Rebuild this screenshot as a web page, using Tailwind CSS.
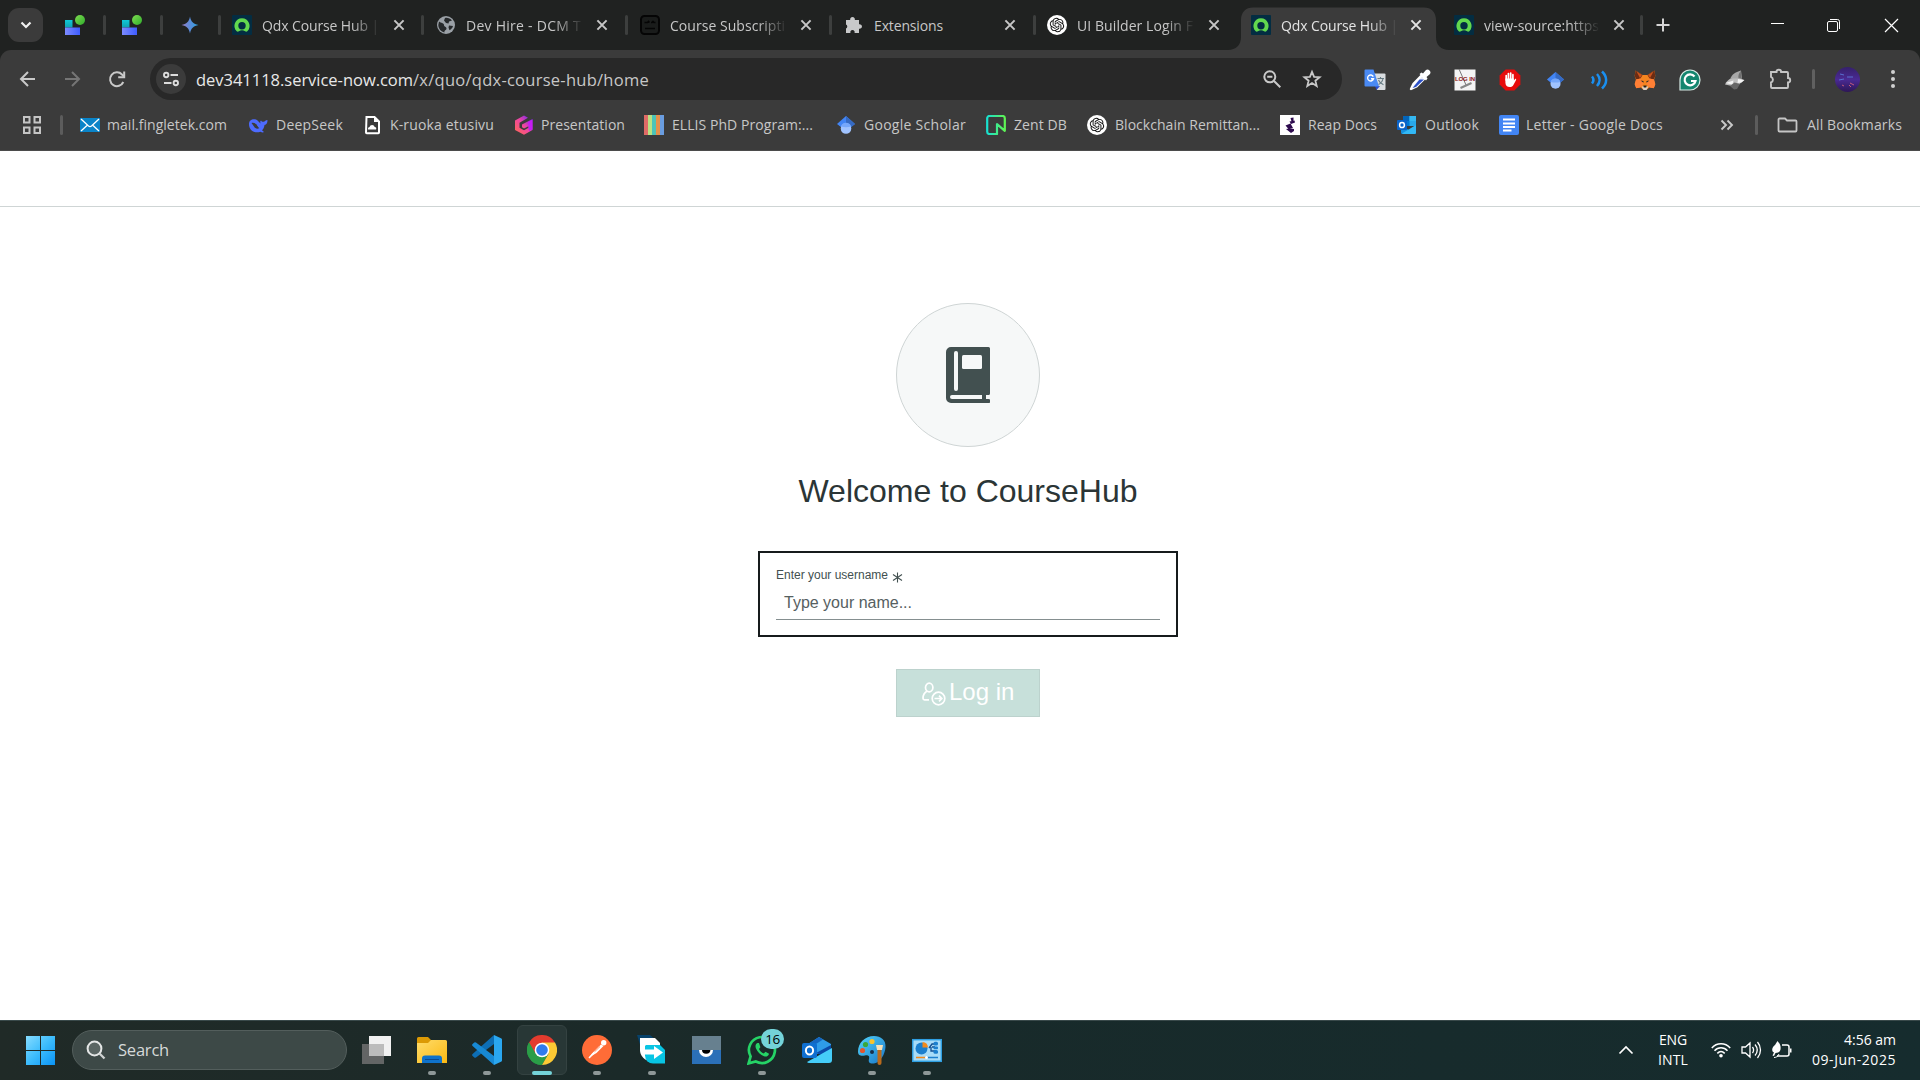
<!DOCTYPE html>
<html lang="en">
<head>
<meta charset="utf-8">
<title>Qdx Course Hub</title>
<script src="https://cdn.jsdelivr.net/npm/@tailwindcss/browser@4"></script>
</head>
<body class="w-[1920px] h-[1080px] overflow-hidden flex flex-col bg-white font-['Open_Sans','Noto_Sans',sans-serif] text-[14px]">

<svg class="absolute size-0">
  <defs><linearGradient id="lfa" x1="0" y1="0" x2="0" y2="1"><stop offset="0" stop-color="#10c8d8"/><stop offset="1" stop-color="#0fa3b0"/></linearGradient><linearGradient id="lfb" x1="0" x2="1"><stop offset="0" stop-color="#7d8bff"/><stop offset="1" stop-color="#3d5cff"/></linearGradient><linearGradient id="lfc" x1="0" x2="1" y2="1"><stop offset="0" stop-color="#7fdc50"/><stop offset="1" stop-color="#2fae2c"/></linearGradient></defs>
  <symbol id="x" viewBox="0 0 16 16"><path d="M3.400 3.400l9.200 9.200M12.600 3.400l-9.200 9.200" stroke="currentColor" stroke-width="2" fill="none"/></symbol>
  <symbol id="quo" viewBox="0 0 20 20"><rect width="20" height="20" rx="1" fill="#032d42"/><path d="M10 3.200a7.600 7.600 0 0 0-5.300 13c.6.6 1.500.6 2.200.1a5.200 5.200 0 0 1 6.200 0c.7.5 1.600.5 2.200-.1A7.600 7.600 0 0 0 10 3.200zm0 11.200a3.700 3.700 0 1 1 0-7.400 3.700 3.700 0 0 1 0 7.400z" fill="#62d84e"/></symbol>
  <symbol id="lf" viewBox="0 0 20 20"><path d="M0 5h7.500v7.500H0z" fill="url(#lfa)"/><path d="M0 12.500h15V20H0z" fill="url(#lfb)"/><circle cx="15" cy="5" r="5" fill="url(#lfc)"/></symbol>
  <symbol id="gpt" viewBox="0 0 20 20"><circle cx="10" cy="10" r="10" fill="#fff"/><g transform="translate(2.800 2.800) scale(.6)"><path fill="#111" d="M22.282 9.821a5.985 5.985 0 0 0-.516-4.910 6.046 6.046 0 0 0-6.510-2.900A6.065 6.065 0 0 0 4.981 4.180a5.985 5.985 0 0 0-3.998 2.900 6.046 6.046 0 0 0 .743 7.097 5.980 5.980 0 0 0 .510 4.911 6.051 6.051 0 0 0 6.515 2.900A5.985 5.985 0 0 0 13.260 24a6.056 6.056 0 0 0 5.772-4.206 5.990 5.990 0 0 0 3.997-2.900 6.056 6.056 0 0 0-.747-7.073zM13.260 22.430a4.476 4.476 0 0 1-2.876-1.040l.141-.081 4.779-2.758a.795.795 0 0 0 .392-.681v-6.737l2.020 1.168a.071.071 0 0 1 .038.052v5.583a4.504 4.504 0 0 1-4.494 4.494zM3.600 18.304a4.470 4.470 0 0 1-.535-3.014l.142.085 4.783 2.759a.771.771 0 0 0 .780 0l5.843-3.369v2.332a.080.080 0 0 1-.033.062L9.740 19.950a4.500 4.500 0 0 1-6.140-1.646zM2.340 7.896a4.485 4.485 0 0 1 2.366-1.973V11.600a.766.766 0 0 0 .388.676l5.815 3.355-2.020 1.168a.076.076 0 0 1-.071 0l-4.830-2.786A4.504 4.504 0 0 1 2.340 7.872zm16.597 3.855l-5.833-3.387L15.119 7.200a.076.076 0 0 1 .071 0l4.830 2.791a4.494 4.494 0 0 1-.676 8.105v-5.678a.790.790 0 0 0-.407-.667zm2.010-3.023l-.141-.085-4.774-2.782a.776.776 0 0 0-.785 0L9.409 9.230V6.897a.066.066 0 0 1 .028-.061l4.830-2.787a4.500 4.500 0 0 1 6.680 4.660zm-12.640 4.135l-2.020-1.164a.080.080 0 0 1-.038-.057V6.075a4.500 4.500 0 0 1 7.375-3.453l-.142.080L8.704 5.460a.795.795 0 0 0-.393.681zm1.097-2.365l2.602-1.500 2.607 1.500v2.999l-2.597 1.500-2.607-1.500z"/></g></symbol>
  <symbol id="outlook" viewBox="0 0 20 20"><path d="M6 1h13v10H6z" fill="#28a8ea"/><path d="M6 1h6.500v5H6z" fill="#0364b8"/><path d="M12.500 1H19v5h-6.500z" fill="#35b8f1"/><path d="M6 6h6.500v5H6z" fill="#0078d4"/><path d="M4 10l8 5 7-5v7.500a1.500 1.500 0 0 1-1.500 1.500h-12A1.500 1.500 0 0 1 4 17.500z" fill="#1490df"/><path d="M19 10L5 18.600l1 .4h11.500a1.500 1.500 0 0 0 1.500-1.500z" fill="#32b8f5"/><rect y="5" width="10" height="10" rx="1" fill="#0a63c9"/><ellipse cx="5" cy="10" rx="2.400" ry="2.600" fill="none" stroke="#fff" stroke-width="1.500"/></symbol>
  <symbol id="scholar" viewBox="0 0 20 20"><path d="M10 1L1 9l4.500 3.600h9L19 9z" fill="#4285f4"/><path d="M10 1l9 8-4.500 3.500L10 9z" fill="#356ac3"/><circle cx="10" cy="13.400" r="5.300" fill="#a0c3ff"/><path d="M4.900 11.500a5.400 5.400 0 0 1 10.200 0 20 20 0 0 1-10.200 0z" fill="#76a7fa"/></symbol>
</svg>

<!-- tab strip -->
<header class="h-[50px] shrink-0 bg-[#202221] flex items-center text-[#c7c7c7] relative">
  <div class="w-[35px] h-[34px] ml-2 rounded-[11px] bg-[#3b3b3b] flex items-center justify-center"><svg class="size-4" viewBox="0 0 16 16"><path d="M3.500 5.500L8 10l4.500-4.500" stroke="#f0f0f0" stroke-width="2.200" fill="none"/></svg></div>
  <svg class="size-5 ml-[22px]"><use href="#lf"/></svg>
  <i class="w-[3px] h-5 rounded bg-[#3d3f3e] ml-[18px]"></i>
  <svg class="size-5 ml-[16px]"><use href="#lf"/></svg>
  <i class="w-[3px] h-5 rounded bg-[#3d3f3e] ml-[18px]"></i>
  <svg class="size-5 ml-[17px]" viewBox="0 0 20 20"><defs><linearGradient id="gm" x1="0" x2="1"><stop offset="0" stop-color="#9a7bc0"/><stop offset=".5" stop-color="#5a8ddb"/><stop offset="1" stop-color="#2aa0dc"/></linearGradient></defs><path d="M10 1.500c.8 5 3.500 7.700 8.500 8.500-5 .8-7.700 3.500-8.500 8.500-.8-5-3.500-7.700-8.500-8.500 5-.8 7.700-3.500 8.500-8.500z" fill="url(#gm)"/></svg>
  <i class="w-[3px] h-5 rounded bg-[#3d3f3e] ml-[18px]"></i>

  <div class="w-[203px] h-full flex items-center pl-[11px] relative">
    <svg class="size-5"><use href="#quo"/></svg>
    <div class="w-[118px] ml-[10px] overflow-hidden whitespace-nowrap [mask-image:linear-gradient(to_right,black_76%,transparent_100%)]"><span data-w="117">Qdx Course Hub |</span></div>
    <svg class="size-4 ml-[11px]"><use href="#x"/></svg>
    <i class="absolute right-0 w-[3px] h-5 rounded bg-[#3d3f3e]"></i>
  </div>
  <div class="w-[204px] h-full flex items-center pl-[12px] relative">
    <svg class="size-5" viewBox="0 0 20 20"><circle cx="10" cy="10" r="9" fill="#9aa0a6"/><path d="M3 6.500C5 8 8 8 8 10s2.500 1.500 2.500 3.500S8 15 8.500 17.500C5 16.500 2.500 14 2.300 10zM9 3c2-.7 5 0 7 2.500l-3 1-.5 2-2.500-.5-2-2.500zM13 10.500l4 .5c-.5 2-2 3.500-3.500 4.300l-1-2.800z" fill="#26292b"/></svg>
    <div class="w-[118px] ml-[10px] overflow-hidden whitespace-nowrap [mask-image:linear-gradient(to_right,black_74%,transparent_100%)]"><span data-w="115">Dev Hire - DCM T</span></div>
    <svg class="size-4 ml-[10px]"><use href="#x"/></svg>
    <i class="absolute right-0 w-[3px] h-5 rounded bg-[#3d3f3e]"></i>
  </div>
  <div class="w-[204px] h-full flex items-center pl-[12px] relative">
    <svg class="size-5" viewBox="0 0 20 20" fill="none" stroke="#050505"><rect x="1" y="1" width="18" height="18" rx="3.500" fill="#1a1c1b" stroke-width="2"/><path d="M4.500 7.500h3l1-1 1 1M11 7.500h1l1-1 1 1h1.500M5 13.500h10" stroke-width="1.600"/></svg>
    <div class="w-[118px] ml-[10px] overflow-hidden whitespace-nowrap [mask-image:linear-gradient(to_right,black_74%,transparent_100%)]"><span data-w="115">Course Subscripti</span></div>
    <svg class="size-4 ml-[10px]"><use href="#x"/></svg>
    <i class="absolute right-0 w-[3px] h-5 rounded bg-[#3d3f3e]"></i>
  </div>
  <div class="w-[204px] h-full flex items-center pl-[12px] relative">
    <svg class="size-5" viewBox="0 0 20 20"><path d="M2 5h4.200a2.400 2.400 0 1 1 4.600 0H15v4.300a2.300 2.300 0 1 1 0 4.400V18h-4.500a2.200 2.200 0 1 0-4 0H2v-4.500a2.200 2.200 0 0 0 0-4z" fill="#c8c9ca"/></svg>
    <div class="w-[118px] ml-[10px] overflow-hidden whitespace-nowrap"><span data-w="69">Extensions</span></div>
    <svg class="size-4 ml-[10px]"><use href="#x"/></svg>
    <i class="absolute right-0 w-[3px] h-5 rounded bg-[#3d3f3e]"></i>
  </div>
  <div class="w-[203px] h-full flex items-center pl-[11px] relative">
    <svg class="size-5"><use href="#gpt"/></svg>
    <div class="w-[118px] ml-[10px] overflow-hidden whitespace-nowrap [mask-image:linear-gradient(to_right,black_74%,transparent_100%)]"><span data-w="116">UI Builder Login F</span></div>
    <svg class="size-4 ml-[11px]"><use href="#x"/></svg>
  </div>
  <div class="w-[203px] h-full flex items-center pl-[12px] relative text-[#e3e3e3]">
    <svg class="absolute -left-[11px] top-[7px] w-[221px] h-[43px]" viewBox="0 0 221 43"><path d="M0 43c8 0 13-5 13-13V13C13 5 18 .5 25 .5h171c7 0 12 4.500 12 12.500v17c0 8 5 13 13 13z" fill="#3b3b3b"/></svg>
    <svg class="size-5 relative"><use href="#quo"/></svg>
    <div class="w-[118px] ml-[10px] relative overflow-hidden whitespace-nowrap [mask-image:linear-gradient(to_right,black_74%,transparent_99%)]"><span data-w="117">Qdx Course Hub |</span></div>
    <svg class="size-4 ml-[9px] relative"><use href="#x"/></svg>
  </div>
  <div class="w-[201px] h-full flex items-center pl-[12px] relative">
    <svg class="size-5"><use href="#quo"/></svg>
    <div class="w-[116px] ml-[10px] overflow-hidden whitespace-nowrap [mask-image:linear-gradient(to_right,black_74%,transparent_100%)]"><span data-w="115">view-source:https</span></div>
    <svg class="size-4 ml-[11px]"><use href="#x"/></svg>
    <i class="absolute right-0 w-[3px] h-5 rounded bg-[#3d3f3e]"></i>
  </div>
  <svg class="size-4 ml-[12px]" viewBox="0 0 16 16"><path d="M8 1.500v13M1.500 8h13" stroke="#d5d5d5" stroke-width="2"/></svg>
  <div class="ml-auto mr-[21px] flex items-center gap-[42px]">
    <svg class="w-[15px] h-4" viewBox="0 0 15 16"><path d="M1 6.500h13" stroke="#fff"/></svg>
    <svg class="size-[15px] -translate-x-px" viewBox="0 0 15 15" fill="none" stroke="#fff"><rect x="1.500" y="3.500" width="10" height="10" rx="1.500"/><path d="M4 1.500h7.500a2 2 0 0 1 2 2V11"/></svg>
    <svg class="size-[15px]" viewBox="0 0 15 15"><path d="M1 1l13 13M14 1L1 14" stroke="#fff" stroke-width="1.200"/></svg>
  </div>
</header>

<!-- address bar and bookmarks -->
<div class="bg-[#202221] shrink-0">
<div class="h-[101px] bg-[#3b3b3b] rounded-t-[11px] border-b border-[#4b4b4b]">
  <div class="h-[58px] flex items-center text-[#c7c7c7]">
    <svg class="size-5 ml-[17px]" viewBox="0 0 20 20"><path d="M18 10H4M11 3l-7 7 7 7" stroke="#c9c9c9" stroke-width="2" fill="none"/></svg>
    <svg class="size-5 ml-[26px]" viewBox="0 0 20 20"><path d="M2 10h14M9 3l7 7-7 7" stroke="#757575" stroke-width="2" fill="none"/></svg>
    <svg class="size-5 ml-[24px]" viewBox="0 0 20 20"><path d="M16.300 13A6.900 6.900 0 1 1 15 5.500l2 2" stroke="#c9c9c9" stroke-width="2" fill="none"/><path d="M17.200 2.500V8.200h-6" stroke="#c9c9c9" stroke-width="2" fill="none"/></svg>
    <div class="ml-[23px] w-[1192px] h-[42px] rounded-full bg-[#282828] flex items-center pl-[6px] pr-[20px]">
      <div class="size-[30px] rounded-full bg-[#3b3b3b] flex items-center justify-center"><svg class="size-[18px]" viewBox="0 0 18 18" fill="none" stroke="#dcdcdc" stroke-width="1.900"><circle cx="4.200" cy="5" r="2.200"/><path d="M8.500 5H16M2 13h7.500"/><circle cx="13.800" cy="13" r="2.200"/></svg></div>
      <div class="ml-[10px] pt-[2px] text-[16.500px] whitespace-nowrap"><span data-w="217" class="text-[#e8e8e8]">dev341118.service-now.com</span><span data-w="236">/x/quo/qdx-course-hub/home</span></div>
      <svg class="size-5 ml-auto" viewBox="0 0 20 20" fill="none" stroke="#c9c9c9" stroke-width="2"><circle cx="7.800" cy="7.800" r="5.500"/><path d="M12 12l6.300 6.300M5.200 7.800h5.200"/></svg>
      <svg class="size-5 ml-5" viewBox="0 0 20 20" fill="none" stroke="#c9c9c9" stroke-width="1.800"><path d="M10 2.800l2.100 5 5.500.4-4.200 3.500 1.300 5.300-4.700-2.900L5.300 17l1.300-5.300-4.200-3.500 5.500-.4z"/></svg>
    </div>
    <div class="ml-[10.500px] pt-[2px] flex items-center">
      <div class="w-[45px] flex justify-center"><svg class="size-[22px]" viewBox="0 0 22 22"><path d="M9 4.500h11.500a1 1 0 0 1 1 1V20a1 1 0 0 1-1 1H13z" fill="#d9dde0"/><path d="M13.500 9.500h6.500M16.500 8v1.500M19 9.500c-.5 3-2.500 5-4.500 6M14.500 11c1 2.500 3 4 5 4.800" stroke="#667b83" stroke-width="1.100" fill="none"/><path d="M11 17h5l-3.500 4z" fill="#2a49c9"/><path d="M1.500.5h8l5.500 17H1.500a1 1 0 0 1-1-1v-15a1 1 0 0 1 1-1z" fill="#4a8af4"/><path d="M9.300 7.600A3 3 0 1 0 9.500 9.800H7" stroke="#fff" stroke-width="1.400" fill="none"/></svg></div>
      <div class="w-[45px] flex justify-center"><svg class="size-[22px]" viewBox="0 0 22 22"><path d="M13 6L4.500 14.800 2 20l5.500-2.500L16 9z" fill="#e8ecf5" stroke="#fff" stroke-width="2.400" stroke-linejoin="round"/><path d="M10.500 10.500h4.500L7 18l-3.500 1z" fill="#2b50c8"/><path d="M10.500 5l2-1.500 1.500 1 2.500-3A2.500 2.500 0 0 1 20.500 5.500L17.500 8l1 1.500-1.500 2z" fill="#fff"/></svg></div>
      <div class="w-[45px] flex justify-center"><svg class="size-[22px]" viewBox="0 0 22 22"><path d="M.5.5h21v21H.5z" fill="#f4f4f4"/><path d="M5 0l7 16" stroke="#777"/><path d="M6.500 19l11-5" stroke="#888" stroke-width="2.200"/><text x="1" y="12" font-family="Liberation Sans" font-size="6" font-weight="700" textLength="20" fill="#8e1b1b">LOG IN</text></svg></div>
      <div class="w-[45px] flex justify-center"><svg class="size-[22px]" viewBox="0 0 22 22"><path d="M6.600.6h8.800l6 6v8.800l-6 6H6.600l-6-6V6.600z" fill="#e60c0c"/><path d="M7.200 11V6.500M9.400 10V4.500M11.700 10V4M13.900 11V5.700" stroke="#fff" stroke-width="1.700" stroke-linecap="round"/><path d="M6.400 9.500h8.400v2l1.300-1.500c.7-.5 1.300.2 1 1l-2.700 5c-.8 1.500-1.800 2-3.600 2-2.600 0-4.400-1.500-4.400-4.500z" fill="#fff"/></svg></div>
      <div class="w-[45px] flex justify-center"><svg class="size-[19px]"><use href="#scholar"/></svg></div>
      <div class="w-[45px] flex justify-center"><svg class="size-[20px]" viewBox="0 0 20 20" fill="none" stroke="#1a8ff0" stroke-width="2.500"><path d="M2 6.500c1.800 2.200 1.800 4.800 0 7M7 4c3.400 3.700 3.400 8.300 0 12M12 1.500c5.500 5.200 5.500 11.800 0 17"/></svg></div>
      <div class="w-[45px] flex justify-center"><svg class="size-[22px]" viewBox="0 0 22 22"><path d="M1.500 1.500L8.500 6h5l7-4.500.8 5.500-1.300 4 1.300 4-1.500 4-4.300-.8-2.500 2.300H9l-2.500-2.300-4.300.8-1.500-4L2 11 .7 7z" fill="#f5841f"/><path d="M1.500 1.500L8.500 6 6.500 9.500 2 10.500.8 7zM20.500 1.500l-7 4.500 2 3.500 4.500 1L21.200 7z" fill="#6b2c14"/><path d="M2.500 2.500L8 6 6 9zM19.500 2.500L14 6l2 3z" fill="#c9531d"/><path d="M2 10.500l4.500-1 3 5-3 4-4.300.8-1.500-4zM20 10.500l-4.500-1-3 5 3 4 4.300.8 1.500-4z" fill="#ff7f35"/><path d="M6.500 11.500l3 .5v1.700zM15.500 11.500l-3 .5v1.700z" fill="#2b2b2b"/><path d="M7.500 17.500h7l-2 3.500h-3z" fill="#dccfc4"/><path d="M9.300 16.500h3.400l-.5 2H9.800z" fill="#222"/></svg></div>
      <div class="w-[45px] flex justify-center"><svg class="size-[22px]" viewBox="0 0 22 22"><path d="M1 21V11A10 10 0 1 1 11 21z" fill="#13866f" stroke="#d7ece6" stroke-width="1.200"/><path d="M15.500 7.500a5.500 5.500 0 1 0 1 4.500H12" stroke="#fff" stroke-width="2.200" fill="none"/></svg></div>
      <div class="w-[45px] flex justify-center"><svg class="size-[22px]" viewBox="0 0 22 22"><path d="M17 1.500C11 3 7.500 6 6.500 9.500L12 11l6-1z" fill="#a8a8a8"/><path d="M17 1.500c-2 2.500-3 5-2.500 8l3.500.5c-1-3-1.500-6-1-8.500z" fill="#6f6f6f"/><path d="M6.500 9.500C4 11 2 13 1 15.500l7 1.500 7-1.500 5-4.500-4-1.500z" fill="#bdbdbd"/><path d="M1.500 14l8-2.500-1 4zM14 10l6.500 1-3 2.500-4 .5z" fill="#f3f3f3"/><path d="M6 17l4.500-3.500L16 15l-3 5-3 .5z" fill="#666"/></svg></div>
      <div class="w-[45px] flex justify-center"><svg class="size-[24px] -mt-[3px]" viewBox="0 0 24 24"><path d="M3 5h5.500a2.300 2.300 0 0 1 4.600 0H19a1 1 0 0 1 1 1v5a2.200 2.200 0 0 1 0 4.400V20a1 1 0 0 1-1 1H4a1 1 0 0 1-1-1v-4.500a3 3 0 0 0 0-5.600z" fill="none" stroke="#c5c5c5" stroke-width="1.900"/></svg></div>
    </div>
    <i class="ml-[9.500px] w-[3px] h-5 rounded bg-[#606060]"></i>
    <svg class="ml-[20px] size-[25px]" viewBox="0 0 25 25"><defs><linearGradient id="av" x1="0" y1="0" x2="0" y2="1"><stop offset="0" stop-color="#35206b"/><stop offset=".5" stop-color="#4a2a93"/><stop offset="1" stop-color="#2d1656"/></linearGradient></defs><circle cx="12.500" cy="12.500" r="12.500" fill="url(#av)"/><path d="M5 7l4 1M12 10h6M4 13l5-1" stroke="#5a78d8" stroke-width=".9" fill="none"/><path d="M15 16l4 2M14 18l2 2M7 18l2 1" stroke="#d0607a" stroke-width=".9" fill="none"/></svg>
    <svg class="ml-[23px] size-5" viewBox="0 0 20 20" fill="#d0d0d0"><circle cx="10" cy="3" r="2"/><circle cx="10" cy="10" r="2"/><circle cx="10" cy="17" r="2"/></svg>
  </div>

  <div class="h-[34px] flex items-center text-[#c7c7c7] whitespace-nowrap [&_span]:-mt-[2px]">
    <svg class="ml-[22px] size-5" viewBox="0 0 20 20" fill="none" stroke="#c5c5c5" stroke-width="2"><path d="M2 2h5.500v5.500H2zM12.500 2H18v5.500h-5.500zM2 12.500h5.500V18H2zM12.500 12.500H18V18h-5.500z"/></svg>
    <i class="ml-[18px] w-[3px] h-5 rounded bg-[#5c5c5c]"></i>
    <div class="ml-[17px] w-[168px] flex items-center gap-[7px]"><svg class="size-5" viewBox="0 0 20 20"><path d="M0 3h20v14H0z" fill="#0a84c8"/><path d="M1 4l7.500 7q1.500 1.200 3 0L19 4M1 16l6-5.500M19 16l-6-5.500" stroke="#fff" stroke-width="1.300" fill="none"/></svg><span data-w="120">mail.fingletek.com</span></div>
    <div class="w-[114px] flex items-center gap-2"><svg class="size-5" viewBox="0 0 20 20"><path d="M1 9c0-4 3.500-5.500 7-4.500 2 .5 2.500 2.500 4.500 4 0-1-1-2 .5-3 .5 1 1.500 1.500 2.500 1.300C17 6.500 17.500 5 19.500 5c0 3-1 4.500-3 5-.3 2-1 4-2.500 5.200l2 1.800c-1 .8-2.500.3-3.500-.3C6 19 1 15 1 9z" fill="#4d6bfe"/><path d="M3.500 8c3-.8 6 1.500 8 5-2 1.500-4.500.5-5.500-1.500z" fill="#3b3b3b"/><path d="M8.500 9.500l3 .5 1.500 3.500-2.500-1z" fill="#4d6bfe"/></svg><span data-w="67">DeepSeek</span></div>
    <div class="w-[152px] flex items-center gap-2"><svg class="size-5" viewBox="0 0 20 20"><path d="M4.500 2h8L17 6.500v11a.7.700 0 0 1-.7.700H4.700a.7.700 0 0 1-.7-.7z" fill="#3b3b3b" stroke="#fff" stroke-width="2"/><path d="M12 2v5h5z" fill="#fff"/><path d="M6 14.500a2 2 0 0 1 1.500-2.500 2.700 2.700 0 0 1 5.200 0 1.800 1.800 0 0 1 1.300 2.500z" fill="#fff"/></svg><span data-w="104">K-ruoka etusivu</span></div>
    <div class="w-[130px] flex items-center gap-[7px]"><svg class="size-5" viewBox="0 0 20 20"><defs><linearGradient id="pr" x1="0" y1="1" x2="1" y2="0"><stop offset="0" stop-color="#ff6a4d"/><stop offset=".5" stop-color="#f047a0"/><stop offset="1" stop-color="#5a1cff"/></linearGradient></defs><path d="M10 .5l4 2.300-8.500 5v5L10 15.300l4.500-2.500v-1.500L10 13.500 8 12.300V9.500L18.500 4v11L10 19.700 1 15V5.500z" fill="url(#pr)"/><path d="M14 7l4.500-2.500v10L15 16z" fill="#c61cf5"/></svg><span data-w="84">Presentation</span></div>
    <div class="w-[192px] flex items-center gap-2"><svg class="size-5" viewBox="0 0 20 20"><path d="M0 0h4v20H0z" fill="#e06b66"/><path d="M4 0h4v20H4z" fill="#b9e283"/><path d="M8 0h4v20H8z" fill="#4cc3b8"/><path d="M12 0h4v20h-4z" fill="#e5904b"/><path d="M16 0h4v20h-4z" fill="#6a9de0"/></svg><span data-w="141">ELLIS PhD Program:...</span></div>
    <div class="w-[150px] flex items-center gap-2"><svg class="size-5 shrink-0"><use href="#scholar"/></svg><span data-w="102">Google Scholar</span></div>
    <div class="w-[101px] flex items-center gap-2"><svg class="size-5" viewBox="0 0 20 20"><defs><linearGradient id="ne" x1="0" x2="1"><stop offset="0" stop-color="#18e0d0"/><stop offset="1" stop-color="#5ff553"/></linearGradient></defs><path d="M11 19H3.500A2.300 2.300 0 0 1 1.200 16.700V3.300A2.300 2.300 0 0 1 3.500 1h13a2.300 2.300 0 0 1 2.300 2.300v12.500L11 9.200z" fill="none" stroke="url(#ne)" stroke-width="2.200" stroke-linejoin="round"/></svg><span data-w="53">Zent DB</span></div>
    <div class="w-[193px] flex items-center gap-2"><svg class="size-5"><use href="#gpt"/></svg><span data-w="145">Blockchain Remittan...</span></div>
    <div class="w-[117px] flex items-center gap-2"><svg class="size-5" viewBox="0 0 20 20"><path d="M0 0h20v20H0z" fill="#fff"/><path d="M10.500 3l3-.5v3l-2 1zM9.500 6.500l5-1 .5 2-4 1.500zM5.500 10.500l5-2 2.500 4.500-4.500 1zM9 13.500l5 .5v2l-3 2-5-4z" fill="#2d0a4e"/></svg><span data-w="69">Reap Docs</span></div>
    <div class="w-[102px] flex items-center gap-2"><svg class="size-5"><use href="#outlook"/></svg><span data-w="54">Outlook</span></div>
    <div class="flex items-center gap-[7px]"><svg class="size-5" viewBox="0 0 20 20"><rect width="20" height="20" rx="2" fill="#4285f4"/><path d="M4 4.500h12M4 8.500h12M4 12h12M4 15.500h8.500" stroke="#fff" stroke-width="1.800"/></svg><span data-w="137">Letter - Google Docs</span></div>
    <svg class="ml-auto size-4" viewBox="0 0 16 16" fill="none" stroke="#c9c9c9" stroke-width="1.900"><path d="M2.500 3.500L7 8l-4.500 4.500M8.500 3.500L13 8l-4.500 4.500"/></svg>
    <i class="ml-[20px] w-[3px] h-5 rounded bg-[#5c5c5c]"></i>
    <svg class="ml-[19px] w-[21px] h-5" viewBox="0 0 21 20"><path d="M1.500 4.500a1 1 0 0 1 1-1H8L10 5.500h8.500a1 1 0 0 1 1 1v9a1 1 0 0 1-1 1h-16a1 1 0 0 1-1-1z" fill="none" stroke="#c5c5c5" stroke-width="1.800"/></svg>
    <span class="ml-[9px] mr-[18px]" data-w="95">All Bookmarks</span>
  </div>
</div>
</div>

<!-- page -->
<main class="flex-1 min-h-0 flex flex-col font-['Liberation_Sans',Arial,sans-serif]">
  <div class="h-[56px] shrink-0 border-b border-[#cfd5d5]"></div>
  <section class="w-[420px] ml-[758px] mt-[96px] flex flex-col items-center">
    <div class="size-[144px] rounded-full bg-[#f6f8f8] border border-[#cfd5d5] flex items-center justify-center">
      <svg class="w-[44px] h-[56px]" viewBox="0 0 44 56"><path d="M5 0h37.500A1.500 1.500 0 0 1 44 1.500v45a1.500 1.500 0 0 1-1.500 1.500H40v4h2.500a2 2 0 0 1 0 4H5a5 5 0 0 1-5-5V5a5 5 0 0 1 5-5z" fill="#425050"/><rect x="8" y="4" width="4" height="40" rx="2" fill="#f6f8f8"/><rect x="16" y="8" width="20" height="14" rx="1.500" fill="#f6f8f8"/><path d="M6 48h30v4H6a2 2 0 0 1 0-4z" fill="#f6f8f8"/></svg>
    </div>
    <h1 class="mt-[24px] text-[32px] leading-[40px] text-[#2b3536] whitespace-nowrap"><span data-w="339">Welcome to CourseHub</span></h1>
    <div class="mt-[40px] w-[420px] h-[86px] border-2 border-[#161b1c] px-4 pt-[14px]">
      <label class="flex items-center h-4 text-[12px] leading-4 text-[#425050] whitespace-nowrap"><span data-w="112">Enter your username</span><svg class="ml-[4px] mt-[4px] size-[11px]" viewBox="0 0 11 11"><path d="M5.500.5v10M1 2.500l9 6M10 2.500l-9 6" stroke="#425050" stroke-width="1.100"/></svg></label>
      <div class="h-[37px] pl-2 border-b border-[#858f90] text-[16px] leading-[38px] text-[#566061]"><span class="relative top-px" data-w="128">Type your name...</span></div>
    </div>
    <div class="mt-[32px] w-[144px] h-[48px] bg-[#c7e0da] border border-[#bcd2cd] flex items-center text-white text-[24px] leading-6 pl-[25px]">
      <svg class="size-6 mt-[1px]" viewBox="0 0 24 24" fill="none" stroke="#fff" stroke-width="1.700"><ellipse cx="7.200" cy="5.500" rx="3.700" ry="4.300"/><path d="M5.200 9C2.500 10.500 1 13 1 16.300c0 1 .4 1.500 1.500 1.500H7"/><circle cx="16.500" cy="16.500" r="6.300"/><path d="M12.500 16.500h7M17 13.700l2.800 2.800-2.800 2.800"/></svg>
      <span class="ml-[3px] -mt-[3px] whitespace-nowrap">Log in</span>
    </div>
  </section>
</main>

<!-- taskbar -->
<footer class="h-[60px] shrink-0 bg-linear-to-r from-[#202a27] via-[#182a2a] to-[#162c2e] border-t border-[#39494a] flex items-start text-white">
  <svg class="ml-[26px] mt-[15px] size-[29px]" viewBox="0 0 29 29"><defs><linearGradient id="wn" x1="0" y1="0" x2="1" y2="1"><stop offset="0" stop-color="#86dcff"/><stop offset=".5" stop-color="#3cbcfd"/><stop offset="1" stop-color="#0a93f5"/></linearGradient></defs><path d="M0 0h14v14H0zM15 0h14v14H15zM0 15h14v14H0zM15 15h14v14H15z" fill="url(#wn)"/></svg>
  <div class="ml-[17px] mt-[9px] w-[275px] h-10 rounded-full bg-[#3d4947] border border-[#535e5c] flex items-center pl-[13px] text-[#d6dad9]">
    <svg class="size-5" viewBox="0 0 20 20"><circle cx="8.500" cy="8.500" r="6.900" fill="#5a6563" stroke="#e4e6e6" stroke-width="2"/><path d="M13.500 13.500l5 5" stroke="#cfd2d2" stroke-width="2.300"/></svg>
    <span class="ml-[12px] mt-px text-[16.500px]" data-w="51">Search</span>
  </div>
  <div class="ml-[2px] flex [&>div]:h-[58px]">
    <div class="w-[55px] flex items-center justify-center"><svg class="size-[30px]" viewBox="0 0 30 30"><path d="M0 9h22v20H0z" fill="#636565"/><path d="M7 1h22v20H7z" fill="#f1f1f1"/><path d="M7 9h15v12H7z" fill="#bcbcbc"/></svg></div>
    <div class="w-[55px] relative flex items-center justify-center"><svg class="size-[30px]" viewBox="0 0 30 30"><defs><linearGradient id="fo" x1="0" y1="0" x2="1" y2="1"><stop offset="0" stop-color="#ffdc6b"/><stop offset="1" stop-color="#fbb912"/></linearGradient></defs><path d="M0 3.500A1.500 1.500 0 0 1 1.500 2H11l3 3h14v8H0z" fill="#dc9a05"/><path d="M0 8h11l3-3h14.500A1.500 1.500 0 0 1 30 6.500V28H0z" fill="url(#fo)"/><path d="M5 28v-4.500a3 3 0 0 1 3-3h14a3 3 0 0 1 3 3V28z" fill="#0f72ca"/><path d="M8 24.500h14" stroke="#0a4a91"/></svg><i class="absolute bottom-[4px] w-2 h-1 rounded-full bg-[#8e9898]"></i></div>
    <div class="w-[55px] relative flex items-center justify-center"><svg class="size-[30px]" viewBox="0 0 30 30"><path d="M22 0l7 3.300a1.500 1.500 0 0 1 1 1.500v20.400a1.500 1.500 0 0 1-1 1.500L22 30z" fill="#2aa7f0"/><path d="M22 0v9L4 22.500a1.300 1.300 0 0 1-1.700 0L.6 20.900a1.300 1.300 0 0 1 0-1.900z" fill="#0d6eb5"/><path d="M22 30v-9L4 7.500a1.300 1.300 0 0 0-1.700 0L.6 9.100a1.300 1.300 0 0 0 0 1.900z" fill="#1789d4"/></svg><i class="absolute bottom-[4px] w-2 h-1 rounded-full bg-[#8e9898]"></i></div>
    <div class="w-[55px] relative flex items-center justify-center"><div class="absolute left-[3px] right-[2px] top-[4px] bottom-[4px] rounded-md bg-[#283736] border border-[#344241]"></div><svg class="size-[30px] relative" viewBox="0 0 30 30"><path d="M15 15L2 7.500a15 15 0 0 1 26 0z" fill="#e33b2e"/><path d="M15 15L2 7.500A15 15 0 0 0 15 30l6.500-11.200z" fill="#2a9d47"/><path d="M15 7.500h13A15 15 0 0 1 15 30l6.500-11.200z" fill="#fcc934"/><path d="M2 7.500L8.500 18.700 15 7.500z" fill="#e33b2e"/><path d="M2 7.500l6.500 11.300 4 2L15 30A15 15 0 0 1 2 7.500z" fill="#2a9d47"/><circle cx="15" cy="15" r="7.300" fill="#fff"/><circle cx="15" cy="15" r="5.800" fill="#2f7bed"/></svg><i class="absolute bottom-[4px] w-5 h-1 rounded-full bg-[#74d3d9]"></i></div>
    <div class="w-[55px] relative flex items-center justify-center"><svg class="size-[30px]" viewBox="0 0 30 30"><circle cx="15" cy="15" r="15" fill="#ff6c37"/><path d="M19 9.500l2.500 1.500-7 7-7.500 4.500 3-4z" fill="#fff"/><circle cx="21.700" cy="7.800" r="2.700" fill="#fff"/><path d="M7 23l11-11.500" stroke="#fff" stroke-width="1.500"/><path d="M12.500 16.800L18 11.500" stroke="#ff6c37" stroke-width=".8"/></svg><i class="absolute bottom-[4px] w-2 h-1 rounded-full bg-[#8e9898]"></i></div>
    <div class="w-[55px] relative flex items-center justify-center"><svg class="size-[30px]" viewBox="0 0 30 30"><path d="M0 0h13l5 4v12H5z" fill="#07426b"/><path d="M3 3h15l5 5v18h-9a11 11 0 0 1-11-11z" fill="#fff"/><path d="M9 10h14l5 5v13.500H16a8 8 0 0 1-8-8V11z" fill="#08c5e4"/><path d="M7 14.500h10V11l9 6.500-9 6.500v-4.500H8z" fill="#fff"/></svg><i class="absolute bottom-[4px] w-2 h-1 rounded-full bg-[#8e9898]"></i></div>
    <div class="w-[55px] relative flex items-center justify-center"><svg class="size-[30px]" viewBox="0 0 30 30"><path d="M0 1h29v14H0z" fill="#67808f"/><path d="M0 15h29v14H0z" fill="#2b70b8"/><path d="M7 15a7 7 0 0 0 14 0z" fill="#fff"/><path d="M10 15a4.200 3.700 0 0 0 8.400 0z" fill="#000"/></svg></div>
    <div class="w-[55px] relative flex items-center justify-center"><svg class="size-[30px]" viewBox="0 0 30 30"><path d="M1.600 28.400l2-7A13 13 0 1 1 8.800 26.500z" fill="none" stroke="#25d366" stroke-width="2.700"/><path d="M10.500 8c-2 1-2.500 3-1.500 5.500 1.500 3.500 4.500 6.500 8 7.800 2.500.7 4.500-.3 5-2.600l-3.500-2-1.700 1.800c-2.300-.9-3.800-2.400-4.800-4.500l1.400-1.700L12 8z" fill="#25d366"/></svg><span class="absolute left-[27px] top-[8px] w-[23px] h-5 rounded-full bg-[#74d3d9] text-black text-[13.500px] tracking-[-0.5px] leading-5 text-center">16</span><i class="absolute bottom-[4px] w-2 h-1 rounded-full bg-[#8e9898]"></i></div>
    <div class="w-[55px] relative flex items-center justify-center"><svg class="size-[30px]" viewBox="0 0 30 30"><path d="M6 9L17 2l12 7v10H6z" fill="#2f9ce8"/><path d="M6 9L17 2l4 2.500L6 14z" fill="#1466c0"/><path d="M29 10v14L14 18z" fill="#0b4aa8"/><path d="M30 13v12a3 3 0 0 1-3 3H7a3 3 0 0 1-2-1z" fill="#45cdf8"/><rect y="8" width="15" height="15" rx="2" fill="#0f6fd0"/><ellipse cx="7.500" cy="15.500" rx="3.600" ry="4" fill="none" stroke="#fff" stroke-width="2"/></svg></div>
    <div class="w-[55px] relative flex items-center justify-center"><svg class="size-[30px]" viewBox="0 0 30 30"><defs><linearGradient id="pa" x1="0" y1="0" x2="1" y2="1"><stop offset="0" stop-color="#52d4fa"/><stop offset="1" stop-color="#1976c8"/></linearGradient></defs><path d="M17 1c7 0 12 4 11.500 11S24 27 17 28.500c-4 .5-6-1-5-4.500s-1.500-4-4-3.500-7 1-7-4C1 8 8 1 17 1z" fill="url(#pa)"/><circle cx="8.500" cy="9.500" r="2.600" fill="#3aa83a"/><circle cx="15" cy="6.500" r="2.600" fill="#f8c32c"/><circle cx="5.500" cy="15.500" r="2.600" fill="#e2562f"/><circle cx="15" cy="17" r="2" fill="#17304c"/><path d="M19 10h7l-1 5h-5z" fill="#f6e0b8"/><path d="M20.500 15h4v13a2 2 0 0 1-4 0z" fill="#b96a1c"/></svg><i class="absolute bottom-[4px] w-2 h-1 rounded-full bg-[#8e9898]"></i></div>
    <div class="w-[55px] relative flex items-center justify-center"><svg class="size-[30px]" viewBox="0 0 30 30"><rect x=".7" y="4.700" width="28.600" height="21.600" fill="#a8dcf8" stroke="#2f9fe2" stroke-width="1.500"/><circle cx="9.500" cy="13.500" r="6" fill="#1b7fce"/><path d="M10.500 12.500V7a6 6 0 0 1 5.500 5.500z" fill="#f28a1c"/><path d="M17 13l3-4h3M20 12h3M19 12v4h4" stroke="#134f90" stroke-width="1.300" fill="none"/><rect x="21.500" y="6.800" width="4.500" height="3.800" rx="1.500" fill="#1b7fce"/><rect x="21.500" y="11.500" width="4.500" height="2.700" rx="1" fill="#1b7fce"/><rect x="21.500" y="15" width="4.500" height="3.800" rx="1.500" fill="#1b7fce"/><path d="M4 22.500h10" stroke="#f28a1c" stroke-width="1.500"/><path d="M15 22.500h11" stroke="#1b7fce" stroke-width="1.500"/><circle cx="14.500" cy="22.500" r="1.500" fill="#fff"/></svg><i class="absolute bottom-[4px] w-2 h-1 rounded-full bg-[#8e9898]"></i></div>
  </div>
  <div class="ml-auto mr-[24px] h-[58px] flex items-center">
    <svg class="w-4 h-3" viewBox="0 0 16 12"><path d="M1.500 9.500L8 3l6.500 6.500" stroke="#fff" stroke-width="1.700" fill="none"/></svg>
    <div class="ml-[22px] w-[34px] text-center leading-5 flex flex-col items-center"><span data-w="28">ENG</span><span data-w="30">INTL</span></div>
    <svg class="ml-[21px] w-[20px] h-[16px]" viewBox="0 0 20 16" fill="none" stroke="#fff" stroke-width="1.500"><path d="M.8 6c5-5.600 13.400-5.600 18.400 0M3.500 8.800c3.600-4 9.400-4 13 0M6.300 11.400c2.200-2.200 5.200-2.200 7.400 0"/><circle cx="10" cy="13.700" r="1.800" fill="#fff" stroke="none"/></svg>
    <svg class="ml-[10px] w-[21px] h-[18px]" viewBox="0 0 21 18" fill="none" stroke="#fff" stroke-width="1.300"><path d="M1 6h3.500L9 2v14l-4.500-4H1zM11.500 6c1.300 1.800 1.300 4.200 0 6M14 3.500c2.700 3.300 2.700 7.700 0 11M16.500 1c4 4.700 4 11.300 0 16"/></svg>
    <svg class="ml-[9px] w-[21px] h-[18px]" viewBox="0 0 21 18"><path d="M11 4h5a2 2 0 0 1 2 2v7a2 2 0 0 1-2 2H6" fill="none" stroke="#fff" stroke-width="1.500"/><path d="M19 7.500h1.500v4H19zM6.500 0C9 3 10 5 9.500 8.500 9 11 7 12 4.500 12L3 15 1.500 14.500 3 11.500C0 10 1 6 4 4z" fill="#fff"/><path d="M3 16.500c2 0 4-1 5-3.500" stroke="#fff" fill="none"/></svg>
    <div class="ml-[20px] leading-5 flex flex-col items-end whitespace-nowrap"><span data-w="52">4:56 am</span><span data-w="84">09-Jun-2025</span></div>
  </div>
</footer>

<script>
  // Spread each label over its data-w width by adjusting the letter spacing.
  function fitLabels() {
    document.querySelectorAll('[data-w]').forEach(el => {
      el.style.whiteSpace = 'nowrap';
      el.style.letterSpacing = '0px';
      const r = document.createRange();
      r.selectNodeContents(el);
      const gap = (Number(el.dataset.w) - r.getBoundingClientRect().width) / el.textContent.length;
      el.style.letterSpacing = gap.toFixed(3) + 'px';
    });
  }
  // Fonts and styles may arrive after the markup, so the fit is repeated.
  fitLabels();
  requestAnimationFrame(fitLabels);
  addEventListener('load', fitLabels);
  document.fonts.ready.then(fitLabels);
  [30, 100, 250].forEach(t => setTimeout(fitLabels, t));
</script>
</body>
</html>
